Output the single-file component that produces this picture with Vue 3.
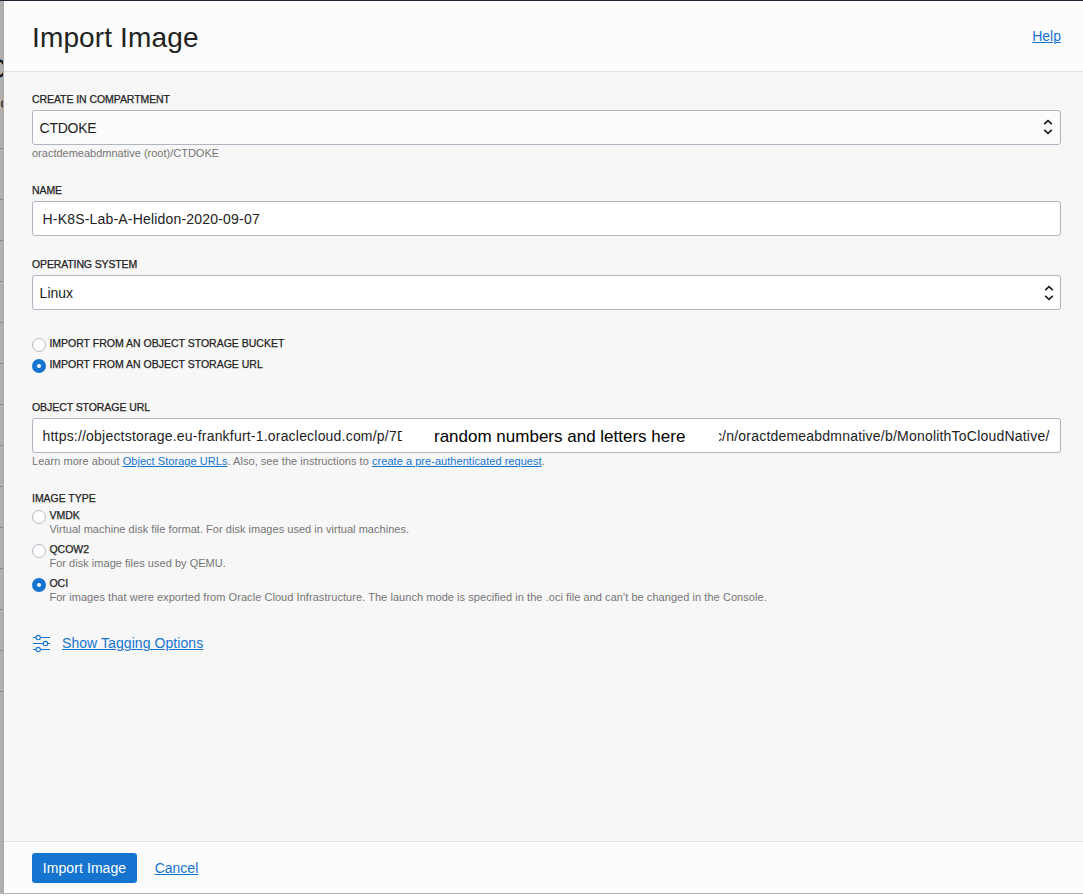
<script setup>
import { ref } from 'vue'

const source = ref('url')
const imageType = ref('oci')

const sources = [
  { id: 'bucket', label: 'IMPORT FROM AN OBJECT STORAGE BUCKET' },
  { id: 'url', label: 'IMPORT FROM AN OBJECT STORAGE URL' },
]

const imageTypes = [
  { id: 'vmdk', label: 'VMDK', text: 'Virtual machine disk file format. For disk images used in virtual machines.' },
  { id: 'qcow2', label: 'QCOW2', text: 'For disk image files used by QEMU.' },
  { id: 'oci', label: 'OCI', text: "For images that were exported from Oracle Cloud Infrastructure. The launch mode is specified in the .oci file and can't be changed in the Console." },
]
</script>

<template>
  <div class="page">
    <aside class="backdrop">
      <div class="backdrop-head">
        <span class="bg-title">C</span>
        <span class="bg-sub">c</span>
      </div>
      <i class="first"></i>
      <i v-for="n in 13" :key="n"></i>
    </aside>

    <section class="panel">
      <header class="header">
        <h1>Import Image</h1>
        <a class="link help-link">Help</a>
      </header>

      <main class="body">
        <div class="label compartment">CREATE IN COMPARTMENT</div>
        <div class="field select soft">
          <span class="caps">CTDOKE</span>
          <svg class="arrows" width="10" height="16" viewBox="0 0 10 16"><path d="M1.2 5.2 5 1.6l3.8 3.6M1.2 10.8 5 14.4l3.8-3.6" /></svg>
        </div>
        <div class="hint root">oractdemeabdmnative (root)/CTDOKE</div>

        <div class="label name">NAME</div>
        <div class="field"><span class="value-name">H-K8S-Lab-A-Helidon-2020-09-07</span></div>

        <div class="label os">OPERATING SYSTEM</div>
        <div class="field select">
          <span>Linux</span>
          <svg class="arrows low" width="10" height="16" viewBox="0 0 10 16"><path d="M1.2 5.2 5 1.6l3.8 3.6M1.2 10.8 5 14.4l3.8-3.6" /></svg>
        </div>

        <div class="sources">
          <div v-for="s in sources" :key="s.id" class="source" @click="source = s.id">
            <b class="radio" :class="{ on: source === s.id }"></b>
            <span class="strong">{{ s.label }}</span>
          </div>
        </div>

        <div class="label url">OBJECT STORAGE URL</div>
        <div class="field url-field">
          <span class="url-start">https://objectstorage.eu-frankfurt-1.oraclecloud.com/p/7D</span>
          <span class="url-mask">random numbers and letters here</span>
          <span class="url-end"><span>c/n/oractdemeabdmnative/b/MonolithToCloudNative/</span></span>
        </div>
        <div class="hint learn">Learn more about <a class="link">Object Storage URLs</a>. Also, see the instructions to <a class="link">create a pre-authenticated request</a>.</div>

        <div class="label type">IMAGE TYPE</div>
        <div v-for="t in imageTypes" :key="t.id" class="type-row" @click="imageType = t.id">
          <b class="radio" :class="{ on: imageType === t.id }"></b>
          <div class="type-copy">
            <div class="type-name"><span class="strong">{{ t.label }}</span></div>
            <p :class="t.id">{{ t.text }}</p>
          </div>
        </div>

        <div class="tagging">
          <svg width="19" height="18" viewBox="0 0 19 18">
            <path d="M1 2.5h3M8.4 2.5h9.6M1 8.5h10M15.6 8.5h2.4M1 14.5h3M8.4 14.5h9.6" />
            <circle cx="6.2" cy="2.5" r="2.2" /><circle cx="13.4" cy="8.5" r="2.2" /><circle cx="6.2" cy="14.5" r="2.2" />
          </svg>
          <a class="link">Show Tagging Options</a>
        </div>
      </main>

      <footer class="footer">
        <button>Import Image</button>
        <a class="link cancel">Cancel</a>
      </footer>
    </section>
  </div>
</template>

<style>
body { background: #fff; }
</style>

<style scoped>
* { box-sizing: border-box; }
.page {
  display: flex; width: 1083px; height: 894px; overflow: hidden;
  border-top: 1px solid #1f2430; border-bottom: 1px solid #b0b7c0;
  font-family: "Liberation Sans", Arial, sans-serif; font-size: 14px; color: #222;
}
.backdrop { width: 4px; flex: none; overflow: hidden; background: #b0afae; border-right: 1px solid #aaa9a8; }
.backdrop-head { height: 147px; padding-top: 50px; }
.backdrop-head span { display: block; color: #161616; }
.bg-title { font-size: 28px; line-height: 36px; margin-left: -14px; }
.bg-sub { font-size: 14px; line-height: 32px; margin-left: 0.5px; }
.backdrop i { display: block; height: 41px; border-top: 1px solid #85898e; }
.backdrop i.first { height: 51px; }

.panel { flex: 1; min-width: 0; display: flex; flex-direction: column; background: #f7f7f7; }
.header {
  height: 71px; flex: none; padding: 0 22px 0 28px; background: #fcfcfc;
  border-bottom: 1px solid #e2e2e2; display: flex; justify-content: space-between;
}
h1 { margin: 0; font-size: 28px; font-weight: 400; line-height: 74px; letter-spacing: 0.14px; }
.link { color: #1474cf; text-decoration: underline; text-underline-offset: 1px; text-decoration-thickness: 1px; cursor: pointer; }
.help-link { line-height: 70px; }

.body { flex: 1; padding: 16px 22px 0 28px; white-space: nowrap; }
.label { height: 22px; line-height: 22px; font-size: 10.5px; letter-spacing: -0.07px; }
.label, .strong { color: #222; -webkit-text-stroke: 0.25px #222; }
.label.type { letter-spacing: -0.04px; }
.strong { font-size: 10.5px; }
.name, .type, .label.url { margin-top: 18px; }
.label.os { margin-top: 17px; letter-spacing: -0.13px; }
.label.url { margin-top: 21px; }
.field {
  height: 35px; border: 1px solid #aeb6c1; border-radius: 3px; background: #fff;
  display: flex; align-items: center; padding: 1px 10px 0 9.5px;
}
.select { padding-left: 6.6px; padding-right: 6px; justify-content: space-between; }
.caps { letter-spacing: -0.25px; }
.value-name { letter-spacing: 0.19px; }
.soft { background: #fcfcfc; padding-right: 7px; }
.arrows { fill: none; stroke: #1c1c1c; stroke-width: 1.6; margin-top: -3px; }
.arrows.low { margin-top: 0; }
.hint { height: 16px; line-height: 16px; font-size: 11px; color: #757575; }
.learn { letter-spacing: 0.045px; }

.sources { margin-top: 23px; }
.source { display: flex; height: 21px; gap: 3.4px; line-height: 21px; }
.radio { width: 14px; height: 14px; flex: none; border: 1px solid #b3bac4; border-radius: 50%; background: #fff; }
.radio.on { border: 5px solid #1474cf; }
.source .radio { margin-top: 5px; }

.url-start { width: 359px; overflow: hidden; letter-spacing: 0.2px; }
.url-mask { margin-left: 32.5px; width: 284.5px; padding-top: 2px; font-size: 17px; color: #000; }
.url-end { width: 331px; display: flex; justify-content: flex-end; overflow: hidden; letter-spacing: 0.21px; }

.type-row { display: flex; gap: 3.4px; height: 34px; font-size: 11px; }
.type-row .radio { margin-top: 1px; }
.type-name { height: 13px; line-height: 13px; }
.type-copy p { margin: 0; line-height: 14px; color: #757575; letter-spacing: 0.03px; }
.type-copy p.oci { letter-spacing: 0.055px; }

.tagging { display: flex; align-items: center; gap: 11px; height: 20px; margin-top: 22px; letter-spacing: 0.07px; }
.tagging svg { fill: none; stroke: #1474cf; stroke-width: 1.15; margin-top: 1px; }

.footer {
  height: 52px; flex: none; border-top: 1px solid #e2e2e2; background: #fcfcfc;
  display: flex; align-items: center; padding: 0 28px; gap: 17.7px;
}
button {
  width: 105px; height: 30px; padding: 0; border: 0; border-radius: 3px; background: #1474cf;
  color: #fff; font: 14px "Liberation Sans", Arial, sans-serif; letter-spacing: 0.08px;
}
</style>
